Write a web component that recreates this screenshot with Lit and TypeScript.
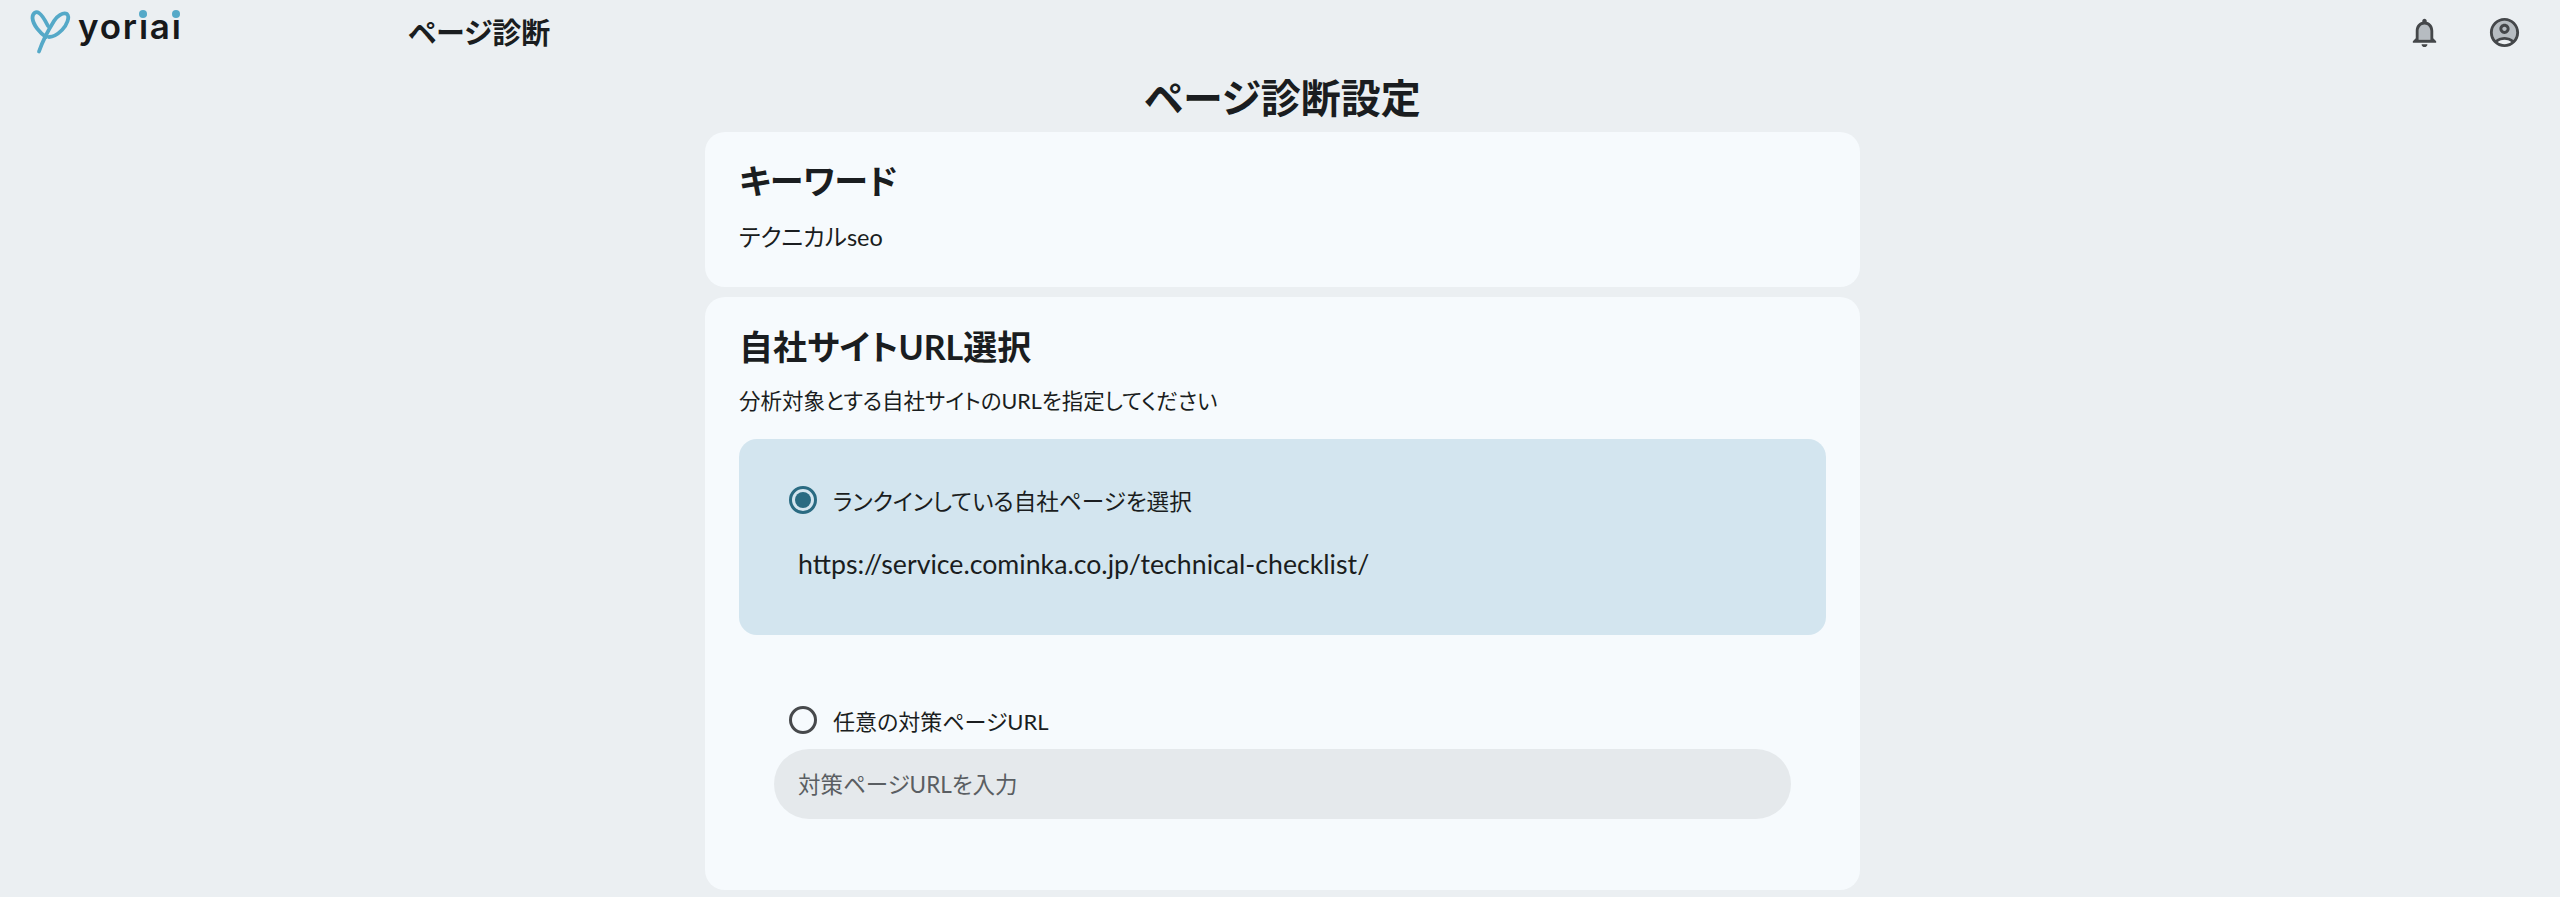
import { LitElement, html, css } from "lit";
import { customElement } from "lit/decorators.js";

@customElement("app-root")
export class AppRoot extends LitElement {
  static styles = css`
    :host {
      display: block;
      height: 897px;
      overflow: hidden;
      background: #ebeff2;
      color: #1a1d20;
      font-family: "Lato", "Noto Sans CJK JP", sans-serif;
      font-feature-settings: "palt";
    }
    header {
      display: flex;
      align-items: center;
      height: 64px;
      padding-left: 25px;
      padding-right: 38px;
    }
    .logo {
      display: flex;
      align-items: center;
      gap: 3px;
      width: 383px;
      height: 60px;
      flex: none;
      align-self: flex-start;
    }
    .logo svg { flex: none; }
    .wordmark {
      position: relative;
      font-family: "Inter", sans-serif;
      font-size: 35px;
      font-weight: 600;
      letter-spacing: 1.8px;
      line-height: 44px;
      margin-top: -8px;
      color: #17191b;
    }
    .dot {
      position: absolute;
      width: 8px;
      height: 8px;
      border-radius: 50%;
      background: #55a9c8;
      top: 6px;
    }
    .dot.a { left: 61px; }
    .dot.b { left: 94px; }
    .page {
      font-size: 29px;
      font-weight: 700;
      flex: 1;
      margin-top: -2px;
    }
    .icons {
      display: flex;
      align-items: center;
      gap: 45px;
    }
    .icons svg { display: block; }
    main {
      display: flex;
      flex-direction: column;
      width: 1155px;
      margin-left: 705px;
      gap: 10px;
    }
    h1 {
      margin: 0 0 -10px;
      height: 68px;
      line-height: 68px;
      text-align: center;
      font-size: 40px;
      font-weight: 700;
    }
    .card {
      background: #f6fafd;
      border-radius: 20px;
      padding: 0 34px;
      box-sizing: border-box;
    }
    .kw { height: 155px; padding-top: 27px; }
    .site { height: 593px; padding-top: 28px; }
    h2 {
      margin: 0;
      font-size: 34px;
      font-weight: 700;
      line-height: 44px;
    }
    .kw p { margin: 16px 0 0; font-size: 23.5px; line-height: 36px; }
    .site > p { margin: 16px 0 0; font-size: 21.5px; line-height: 32px; }
    .selected {
      margin-top: 22px;
      height: 196px;
      background: #d3e5ef;
      border-radius: 18px;
      padding: 45px 0 0 50px;
      box-sizing: border-box;
    }
    .radio-row {
      display: flex;
      align-items: center;
      gap: 16px;
      height: 32px;
      font-size: 22.6px;
    }
    .radio {
      width: 28px;
      height: 28px;
      flex: none;
      border-radius: 50%;
      border: 3px solid #47494c;
      box-sizing: border-box;
    }
    .radio.on {
      border-color: #2a6b82;
      display: flex;
      align-items: center;
      justify-content: center;
    }
    .radio.on::after {
      content: "";
      width: 16px;
      height: 16px;
      border-radius: 50%;
      background: #2a6b82;
    }
    .url {
      margin: 30px 0 0 9px;
      font-size: 26.7px;
      line-height: 36px;
    }
    .other {
      margin-top: 69px;
      padding-left: 50px;
    }
    .other .radio-row { font-size: 22px; }
    .input {
      display: flex;
      align-items: center;
      margin: 13px 35px 0 35px;
      height: 70px;
      border-radius: 35px;
      background: #e5e9ec;
      padding: 0 0 3px 24px;
      box-sizing: border-box;
      font-size: 22.5px;
      color: #5a5e62;
    }
  `;

  render() {
    return html`
      <header>
        <div class="logo">
          <svg width="50" height="50" viewBox="0 0 50 50" fill="none" stroke="#55a9c8" stroke-width="3.8" stroke-linecap="round" stroke-linejoin="round">
            <path d="M14 46.5C18 35 24 24 29 16C32 11 38 7 42 9C45 12 42 20 37 25C33 29 28 32 24 32" />
            <path d="M21 32C15 28 8 20 7.5 13C7.5 8 11 6 14 8C17 10 20 15 23 21" />
          </svg>
          <div class="wordmark">yoriai<span class="dot a"></span><span class="dot b"></span></div>
        </div>
        <div class="page">ページ診断</div>
        <div class="icons">
          <svg width="35" height="35" viewBox="0 0 24 24">
            <path fill="#b6bcc1" d="M12 5.5c-2.49 0-4 2.02-4 4.5v7h8v-6c0-2.48-1.51-5.5-4-5.5z" />
            <path fill="#44474a" d="M12 22c1.1 0 2-.9 2-2h-4c0 1.1.9 2 2 2zm6-6v-5c0-3.07-1.63-5.64-4.5-6.32V4c0-.83-.67-1.5-1.5-1.5s-1.5.67-1.5 1.5v.68C7.64 5.36 6 7.92 6 11v5l-2 2v1h16v-1l-2-2zm-2 1H8v-6c0-2.48 1.51-4.5 4-4.5s4 2.02 4 4.5v6z" />
          </svg>
          <svg width="35" height="35" viewBox="0 0 24 24">
            <path fill="#b6bcc1" d="M12 4c-4.42 0-8 3.58-8 8 0 1.95.7 3.73 1.86 5.12C7.55 15.8 9.68 15 12 15s4.45.8 6.14 2.12C19.3 15.73 20 13.95 20 12c0-4.42-3.58-8-8-8z" />
            <path fill="#44474a" d="M12 2C6.48 2 2 6.48 2 12s4.48 10 10 10 10-4.48 10-10S17.52 2 12 2zM7.35 18.5C8.66 17.56 10.26 17 12 17s3.34.56 4.65 1.5C15.34 19.44 13.74 20 12 20s-3.34-.56-4.65-1.5zm10.79-1.38C16.45 15.8 14.32 15 12 15s-4.45.8-6.14 2.12C4.7 15.73 4 13.95 4 12c0-4.42 3.58-8 8-8s8 3.58 8 8c0 1.95-.7 3.73-1.86 5.12zM12 6c-1.93 0-3.5 1.57-3.5 3.5S10.07 13 12 13s3.5-1.57 3.5-3.5S13.93 6 12 6zm0 5c-.83 0-1.5-.67-1.5-1.5S11.17 8 12 8s1.5.67 1.5 1.5S12.83 11 12 11z" />
          </svg>
        </div>
      </header>
      <main>
        <h1>ページ診断設定</h1>
        <section class="card kw">
          <h2>キーワード</h2>
          <p>テクニカルseo</p>
        </section>
        <section class="card site">
          <h2>自社サイトURL選択</h2>
          <p>分析対象とする自社サイトのURLを指定してください</p>
          <div class="selected">
            <div class="radio-row"><span class="radio on"></span>ランクインしている自社ページを選択</div>
            <div class="url">https://service.cominka.co.jp/technical-checklist/</div>
          </div>
          <div class="other">
            <div class="radio-row"><span class="radio"></span>任意の対策ページURL</div>
          </div>
          <div class="input">対策ページURLを入力</div>
        </section>
      </main>
    `;
  }
}
